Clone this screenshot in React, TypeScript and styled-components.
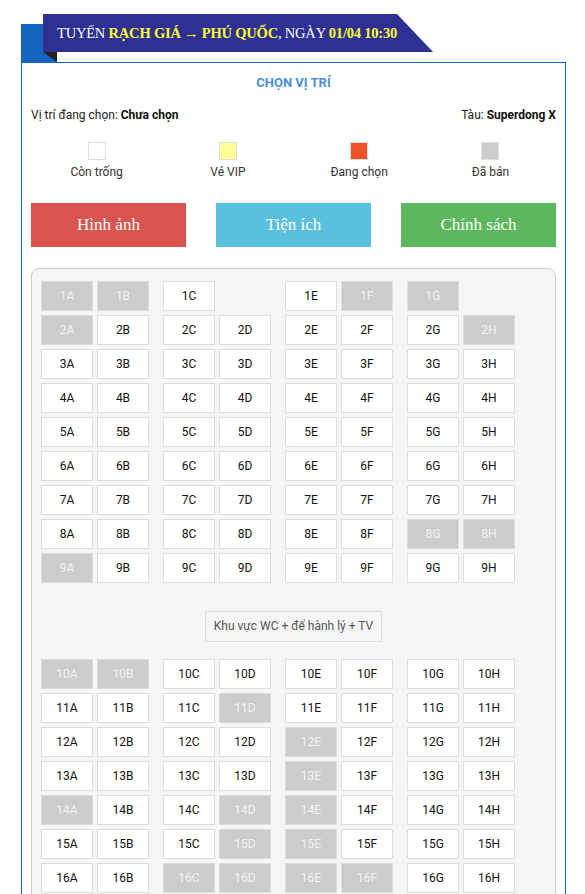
import React from "react";
import styled, { createGlobalStyle } from "styled-components";

const GlobalStyle = createGlobalStyle`
  html, body { margin: 0; padding: 0; background: #fff; overflow: hidden; }
  body { font-family: Roboto, "Liberation Sans", Arial, sans-serif; color: #222; }
`;

const Page = styled.div`
  width: 545px;
  margin-left: 21px;
`;

const Header = styled.div`
  position: relative;
  height: 48px;
  padding-top: 14px;
  &::before {
    content: '';
    position: absolute;
    left: 0;
    top: 24px;
    width: 36px;
    height: 38px;
    background: #1565c0;
  }
`;

const Banner = styled.div`
  position: relative;
  margin-left: 22px;
  width: 390px;
  height: 38px;
  line-height: 38px;
  padding-left: 14px;
  box-sizing: border-box;
  background: #2e3192;
  clip-path: polygon(0 0, 354px 0, 100% 100%, 0 100%);
  color: #fff;
  font-family: "Liberation Serif", "DejaVu Serif", serif;
  font-size: 14.5px;
  letter-spacing: -0.2px;
  white-space: nowrap;
  b { color: #ffff33; }
`;

const Fold = styled.div`
  position: absolute;
  left: 22px;
  top: 52px;
  width: 14px;
  height: 10px;
  background: #222;
  clip-path: polygon(0 0, 100% 0, 100% 100%);
`;

const Box = styled.div`
  border: 1px solid #1565c0;
  padding: 0 9px 20px;
  background: #fff;
`;

const Title = styled.h3`
  margin: 0;
  padding-top: 12px;
  line-height: 16px;
  text-align: center;
  font-size: 13px;
  font-weight: 700;
  color: #4a90d9;
`;

const InfoRow = styled.div`
  display: flex;
  justify-content: space-between;
  margin-top: 17px;
  font-size: 12px;
  line-height: 14px;
  b { font-weight: 700; color: #111; }
`;

const Legend = styled.div`
  display: grid;
  grid-template-columns: repeat(4, 1fr);
  margin-top: 20px;
`;

const LegendItem = styled.div`
  display: flex;
  flex-direction: column;
  align-items: center;
  gap: 5px;
  font-size: 12px;
  line-height: 14px;
  color: #333;
`;

const Swatch = styled.span<{ $bg: string }>`
  width: 18px;
  height: 18px;
  box-sizing: border-box;
  border: 1px solid #ddd;
  background: ${(p) => p.$bg};
`;

const Buttons = styled.div`
  display: grid;
  grid-template-columns: repeat(3, 1fr);
  gap: 30px;
  margin-top: 24px;
`;

const ActionButton = styled.button<{ $bg: string }>`
  height: 44px;
  border: none;
  background: ${(p) => p.$bg};
  color: #fff;
  font-family: "Liberation Serif", "DejaVu Serif", serif;
  font-size: 17px;
  cursor: pointer;
`;

const SeatPanel = styled.div`
  margin-top: 21px;
  border: 1px solid #ccc;
  border-radius: 8px;
  background: #f5f5f5;
  padding: 12px 9px 20px;
  display: flex;
  flex-direction: column;
  gap: 4px;
`;

const SeatRow = styled.div`
  display: flex;
  gap: 14px;
`;

const SeatPair = styled.div`
  display: flex;
  gap: 4px;
`;

const Seat = styled.div<{ $sold?: boolean; $empty?: boolean }>`
  width: 52px;
  height: 30px;
  box-sizing: border-box;
  border: 1px solid ${(p) => (p.$empty ? "transparent" : "#ddd")};
  background: ${(p) => (p.$empty ? "transparent" : p.$sold ? "#ccc" : "#fff")};
  color: ${(p) => (p.$sold ? "#f2f2f2" : "#111")};
  font-size: 12px;
  display: flex;
  align-items: center;
  justify-content: center;
  cursor: ${(p) => (p.$sold || p.$empty ? "default" : "pointer")};
`;

const Zone = styled.div`
  align-self: center;
  margin: 24px 0 13px;
  padding: 0 8px;
  height: 31px;
  line-height: 29px;
  box-sizing: border-box;
  border: 1px solid #ddd;
  font-size: 12px;
  color: #555;
`;

const LETTERS = ["A", "B", "C", "D", "E", "F", "G", "H"];
const SOLD = new Set([
  "1A", "1B", "1F", "1G", "2A", "2H", "8G", "8H", "9A",
  "10A", "10B", "11D", "12E", "13E", "14A", "14D", "14E",
  "15D", "15E", "16C", "16D", "16E", "16F",
]);
const MISSING = new Set(["1D", "1H"]);

const renderRow = (n: number) => (
  <SeatRow key={n}>
    {[0, 2, 4, 6].map((i) => (
      <SeatPair key={i}>
        {LETTERS.slice(i, i + 2).map((l) => {
          const code = `${n}${l}`;
          if (MISSING.has(code)) return <Seat key={code} $empty />;
          return (
            <Seat key={code} $sold={SOLD.has(code)}>
              {code}
            </Seat>
          );
        })}
      </SeatPair>
    ))}
  </SeatRow>
);

const range = (a: number, b: number) => Array.from({ length: b - a + 1 }, (_, i) => a + i);

export default function App() {
  return (
    <Page>
      <GlobalStyle />
      <Header>
        <Banner>
          TUYẾN <b>RẠCH GIÁ → PHÚ QUỐC</b>, NGÀY <b>01/04 10:30</b>
        </Banner>
        <Fold />
      </Header>
      <Box>
        <Title>CHỌN VỊ TRÍ</Title>
        <InfoRow>
          <span>
            Vị trí đang chọn: <b>Chưa chọn</b>
          </span>
          <span>
            Tàu: <b>Superdong X</b>
          </span>
        </InfoRow>
        <Legend>
          <LegendItem><Swatch $bg="#fff" />Còn trống</LegendItem>
          <LegendItem><Swatch $bg="#ffff99" />Vé VIP</LegendItem>
          <LegendItem><Swatch $bg="#f05228" />Đang chọn</LegendItem>
          <LegendItem><Swatch $bg="#ccc" />Đã bán</LegendItem>
        </Legend>
        <Buttons>
          <ActionButton $bg="#d9534f">Hình ảnh</ActionButton>
          <ActionButton $bg="#5bc0de">Tiện ích</ActionButton>
          <ActionButton $bg="#5cb85c">Chính sách</ActionButton>
        </Buttons>
        <SeatPanel>
          {range(1, 9).map(renderRow)}
          <Zone>Khu vực WC + để hành lý + TV</Zone>
          {range(10, 16).map(renderRow)}
        </SeatPanel>
      </Box>
    </Page>
  );
}
